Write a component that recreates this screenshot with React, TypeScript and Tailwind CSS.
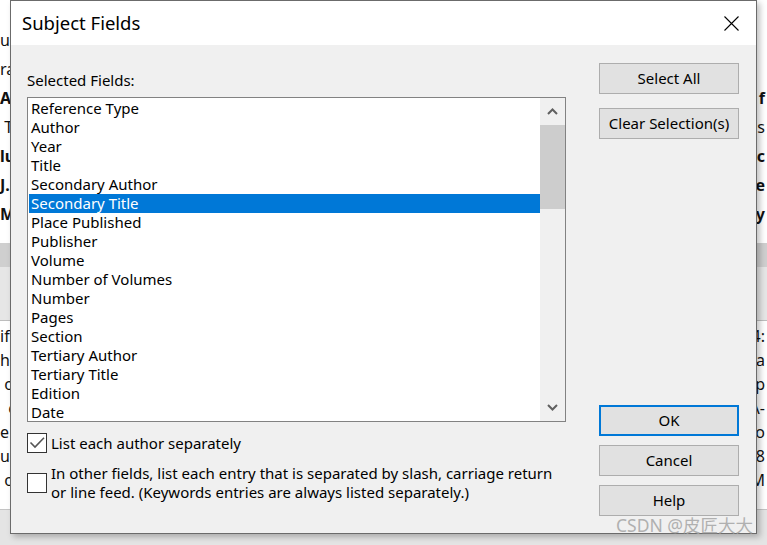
import React from "react";

const fields = [
  "Reference Type",
  "Author",
  "Year",
  "Title",
  "Secondary Author",
  "Secondary Title",
  "Place Published",
  "Publisher",
  "Volume",
  "Number of Volumes",
  "Number",
  "Pages",
  "Section",
  "Tertiary Author",
  "Tertiary Title",
  "Edition",
  "Date",
];

// bits of the page that peek out either side of the dialog
const topRows = [
  { l: "u,", r: "", bold: false },
  { l: "ra", r: "", bold: false },
  { l: "A", r: "n f", bold: true },
  { l: " T", r: "s", bold: false },
  { l: "lu", r: "cic", bold: true },
  { l: "J.", r: "e", bold: true },
  { l: "M", r: "ny", bold: true },
];

const bottomRows = [
  { l: "if", r: "4:" },
  { l: "hi", r: "pa" },
  { l: " o", r: "p" },
  { l: "  c", r: "A-" },
  { l: "e", r: "o" },
  { l: "un", r: ".8" },
  { l: " o", r: "M" },
];

const Chevron = ({ down }: { down?: boolean }) => (
  <svg width="11" height="7" viewBox="0 0 11 7">
    <polyline
      points={down ? "1,1 5.5,5.5 10,1" : "1,6 5.5,1.5 10,6"}
      fill="none"
      stroke="#606060"
      strokeWidth="2"
    />
  </svg>
);

const Btn = ({ label, primary }: { label: string; primary?: boolean }) => (
  <button
    className={
      "h-[31px] w-[140px] bg-[#e1e1e1] text-[15px] text-black flex items-center justify-center " +
      (primary ? "border-2 border-[#0078d7]" : "border border-[#adadad]")
    }
  >
    {label}
  </button>
);

const Check = ({ checked }: { checked?: boolean }) => (
  <div className="w-[20px] h-[20px] shrink-0 bg-white border border-[#333333] flex items-center justify-center">
    {checked && (
      <svg width="18" height="18" viewBox="0 0 18 18">
        <polyline points="2.5,8.5 7,13 16,3.8" fill="none" stroke="#555555" strokeWidth="1.6" />
      </svg>
    )}
  </div>
);

export default function App() {
  return (
    <div className="relative w-[767px] h-[545px] overflow-hidden bg-white font-['Noto_Sans','DejaVu_Sans',sans-serif] text-black">
      {/* page behind the dialog */}
      <div className="flex flex-col h-full text-[16px] text-[#111]">
        <div className="h-[243px] pt-[25px] flex flex-col">
          {topRows.map((r, i) => (
            <div key={i} className={"h-[29px] flex items-center justify-between whitespace-pre " + (r.bold ? "font-bold" : "")}>
              <span>{r.l}</span>
              <span className="pr-[2px]">{r.r}</span>
            </div>
          ))}
        </div>
        <div className="h-[24px] bg-[#cfcfcf]" />
        <div className="h-[54px] bg-[#e6e6e6] border-b border-[#bdbdbd]" />
        <div className="h-[188px] pt-[3px] flex flex-col bg-white">
          {bottomRows.map((r, i) => (
            <div key={i} className="h-[24px] flex items-center justify-between whitespace-pre">
              <span>{r.l}</span>
              <span className="pr-[2px]">{r.r}</span>
            </div>
          ))}
        </div>
        <div className="flex-1 bg-[#e4e4e4] border-t border-[#c4c4c4]" />
      </div>

      {/* dialog */}
      <div className="absolute left-[10px] top-0 w-[747px] h-[534px] border border-[#6b6b6b] bg-[#f0f0f0] flex flex-col shadow-[3px_3px_6px_rgba(0,0,0,0.25)]">
        <div className="h-[44px] bg-white flex items-center justify-between pl-[11px] pr-[17px]">
          <span className="text-[18.5px]">Subject Fields</span>
          <svg width="15" height="15" viewBox="0 0 15 15">
            <path d="M0.5 0.5 L14.5 14.5 M14.5 0.5 L0.5 14.5" stroke="#000" strokeWidth="1.1" />
          </svg>
        </div>

        <div className="flex-1 flex pl-[16px] pr-[17px] pt-[18px] pb-[17px] gap-[33px] text-[15px]">
          <div className="w-[539px] flex flex-col">
            <div className="mt-[8px] h-[19px] leading-[19px]">Selected Fields:</div>
            <div className="mt-[7px] h-[325px] border border-[#828282] bg-white flex overflow-hidden">
              <div className="flex-1 pt-[1px] pl-[1px] overflow-hidden">
                {fields.map((f, i) => (
                  <div
                    key={f}
                    className={
                      "h-[19px] leading-[19px] pl-[2px] whitespace-nowrap " +
                      (i === 5 ? "bg-[#0078d7] text-white" : "")
                    }
                  >
                    {f}
                  </div>
                ))}
              </div>
              <div className="w-[25px] bg-[#f0f0f0] flex flex-col">
                <div className="h-[27px] flex items-center justify-center">
                  <Chevron />
                </div>
                <div className="h-[84px] bg-[#cdcdcd]" />
                <div className="flex-1" />
                <div className="h-[27px] flex items-center justify-center">
                  <Chevron down />
                </div>
              </div>
            </div>

            <div className="mt-[11px] flex items-center gap-[4px]">
              <Check checked />
              <span className="leading-[19px]">List each author separately</span>
            </div>
            <div className="mt-[11px] flex items-center gap-[4px]">
              <Check />
              <span className="leading-[19px]">
                In other fields, list each entry that is separated by slash, carriage return
                <br />
                or line feed. (Keywords entries are always listed separately.)
              </span>
            </div>
          </div>

          <div className="w-[140px] flex flex-col justify-between">
            <div className="flex flex-col gap-[14px]">
              <Btn label="Select All" />
              <Btn label="Clear Selection(s)" />
            </div>
            <div className="flex flex-col gap-[9px]">
              <Btn label="OK" primary />
              <Btn label="Cancel" />
              <Btn label="Help" />
            </div>
          </div>
        </div>
      </div>

      {/* watermark */}
      <div className="absolute right-[14px] bottom-[7px] text-[17.5px] text-[#b0b0b0] font-['Noto_Sans','Noto_Sans_CJK_SC',sans-serif]">
        CSDN @皮匠大大
      </div>
    </div>
  );
}
